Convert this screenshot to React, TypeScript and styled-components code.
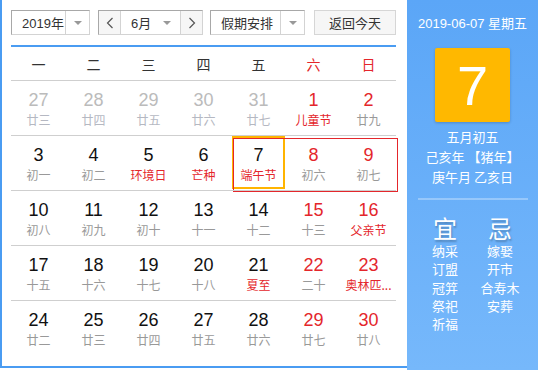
import React from "react";
import styled, { createGlobalStyle } from "styled-components";

const GlobalStyle = createGlobalStyle`
  html, body {
    margin: 0;
    padding: 0;
    background: #fff;
  }
  body {
    font-family: "Liberation Sans", "Noto Sans CJK SC", sans-serif;
  }
`;

const BLUE = "#4a9cf2";
const RED = "#e4262b";

type Day = {
  d: number;
  lunar: string;
  other?: boolean;
  red?: boolean;
  fest?: boolean;
  selected?: boolean;
};

const weeks: Day[][] = [
  [
    { d: 27, lunar: "廿三", other: true },
    { d: 28, lunar: "廿四", other: true },
    { d: 29, lunar: "廿五", other: true },
    { d: 30, lunar: "廿六", other: true },
    { d: 31, lunar: "廿七", other: true },
    { d: 1, lunar: "儿童节", red: true, fest: true },
    { d: 2, lunar: "廿九", red: true },
  ],
  [
    { d: 3, lunar: "初一" },
    { d: 4, lunar: "初二" },
    { d: 5, lunar: "环境日", fest: true },
    { d: 6, lunar: "芒种", fest: true },
    { d: 7, lunar: "端午节", fest: true, selected: true },
    { d: 8, lunar: "初六", red: true },
    { d: 9, lunar: "初七", red: true },
  ],
  [
    { d: 10, lunar: "初八" },
    { d: 11, lunar: "初九" },
    { d: 12, lunar: "初十" },
    { d: 13, lunar: "十一" },
    { d: 14, lunar: "十二" },
    { d: 15, lunar: "十三", red: true },
    { d: 16, lunar: "父亲节", red: true, fest: true },
  ],
  [
    { d: 17, lunar: "十五" },
    { d: 18, lunar: "十六" },
    { d: 19, lunar: "十七" },
    { d: 20, lunar: "十八" },
    { d: 21, lunar: "夏至", fest: true },
    { d: 22, lunar: "二十", red: true },
    { d: 23, lunar: "奥林匹...", red: true, fest: true },
  ],
  [
    { d: 24, lunar: "廿二" },
    { d: 25, lunar: "廿三" },
    { d: 26, lunar: "廿四" },
    { d: 27, lunar: "廿五" },
    { d: 28, lunar: "廿六" },
    { d: 29, lunar: "廿七", red: true },
    { d: 30, lunar: "廿八", red: true },
  ],
];

const weekNames = ["一", "二", "三", "四", "五", "六", "日"];

const Wrapper = styled.div`
  display: flex;
  width: 538px;
  height: 370px;
`;

const Main = styled.div`
  width: 385px;
  height: 356px;
  padding: 10px 11px 0 9px;
  border-left: 2px solid ${BLUE};
  border-bottom: 2px solid ${BLUE};
`;

const Toolbar = styled.div`
  display: flex;
  align-items: stretch;
  height: 25px;
  gap: 8px;
  font-size: 13px;
  color: #333;
`;

const SelectBox = styled.div<{ $w: number; $pull?: boolean }>`
  display: flex;
  width: ${(p) => p.$w}px;
  margin-left: ${(p) => (p.$pull ? "-1px" : "0")};
  box-sizing: border-box;
  border: 1px solid #d3d3d3;
  border-top-color: #a8a8a8;
  border-left-color: #a8a8a8;
  background: #fff;
`;

const SelectText = styled.div`
  flex: 1;
  display: flex;
  align-items: center;
  padding-left: 10px;
`;

const ArrowCell = styled.div`
  width: 23px;
  display: flex;
  align-items: center;
  justify-content: center;
  border-left: 1px solid #d3d3d3;
  &::after {
    content: "";
    border-left: 4px solid transparent;
    border-right: 4px solid transparent;
    border-top: 4px solid #999;
  }
`;

const NavBtn = styled.div<{ $side: "l" | "r" }>`
  width: 21px;
  display: flex;
  align-items: center;
  justify-content: center;
  background: #f6f6f6;
  ${(p) => (p.$side === "l" ? "border-right" : "border-left")}: 1px solid #d3d3d3;
  svg {
    display: block;
  }
`;

const MonthText = styled.div`
  flex: 1;
  display: flex;
  align-items: center;
  justify-content: space-between;
  padding: 0 9px 0 10px;
  &::after {
    content: "";
    border-left: 4px solid transparent;
    border-right: 4px solid transparent;
    border-top: 4px solid #999;
  }
`;

const TodayBtn = styled.div`
  margin-left: auto;
  width: 82px;
  box-sizing: border-box;
  display: flex;
  align-items: center;
  justify-content: center;
  background: #f6f6f6;
  border: 1px solid #d6d6d6;
  color: #333;
`;

const BlueLine = styled.div`
  height: 2px;
  margin-top: 10px;
  background: ${BLUE};
`;

const Grid = styled.div`
  display: grid;
  grid-template-columns: repeat(7, 55px);
`;

const WeekHead = styled.div<{ $red: boolean }>`
  height: 33px;
  display: flex;
  align-items: center;
  justify-content: center;
  font-size: 14px;
  color: ${(p) => (p.$red ? RED : "#333")};
  font-family: "Noto Sans CJK SC", sans-serif;
`;

const Row = styled.div`
  position: relative;
  display: grid;
  grid-template-columns: repeat(7, 55px);
  height: 55px;
  border-top: 1px solid #cfcfcf;
  box-sizing: border-box;
`;

const RangeBox = styled.div`
  position: absolute;
  left: 222px;
  top: 2px;
  width: 165px;
  height: 54px;
  border: 1px solid ${RED};
  box-sizing: border-box;
  pointer-events: none;
`;

const Cell = styled.div<{ $selected?: boolean }>`
  position: relative;
  display: flex;
  flex-direction: column;
  align-items: center;
  padding-top: 9px;
  &::after {
    content: "";
    display: ${(p) => (p.$selected ? "block" : "none")};
    position: absolute;
    left: 1px;
    top: 0;
    width: 53px;
    height: 53px;
    border: 2px solid #ffb400;
    box-sizing: border-box;
  }
`;

const Num = styled.div<{ $color: string }>`
  font-size: 18px;
  line-height: 20px;
  color: ${(p) => p.$color};
`;

const Lunar = styled.div<{ $color: string }>`
  margin-top: 1px;
  font-size: 12px;
  line-height: 17px;
  white-space: nowrap;
  color: ${(p) => p.$color};
  font-family: "Noto Sans CJK SC", sans-serif;
`;

const Side = styled.div`
  width: 131px;
  height: 370px;
  background: linear-gradient(#5ba6f7, #76b8fb);
  color: #fff;
  display: flex;
  flex-direction: column;
  align-items: center;
  font-size: 13px;
`;

const DateLine = styled.div`
  margin-top: 15px;
  line-height: 18px;
`;

const BigDay = styled.div`
  margin-top: 15px;
  width: 75px;
  height: 74px;
  border-radius: 2px;
  background: #ffb800;
  box-shadow: 0 1px 3px rgba(0, 0, 0, 0.2);
  display: flex;
  align-items: center;
  justify-content: center;
  font-size: 56px;
  font-family: "Liberation Sans", sans-serif;
`;

const Info = styled.div`
  margin-top: 5px;
  display: flex;
  flex-direction: column;
  align-items: center;
  line-height: 20px;
  font-family: "Noto Sans CJK SC", sans-serif;
`;

const Divider = styled.div`
  margin-top: 11px;
  width: 110px;
  height: 2px;
  background: rgba(255, 255, 255, 0.3);
`;

const YiJi = styled.div`
  display: grid;
  grid-template-columns: 55px 55px;
  margin-top: 17px;
`;

const YiCol = styled.div`
  display: flex;
  flex-direction: column;
  align-items: center;
`;

const YiHead = styled.div`
  font-size: 24px;
  line-height: 26px;
  text-shadow: 1px 2px 2px rgba(0, 0, 0, 0.25);
`;

const YiItem = styled.div`
  line-height: 18.3px;
  font-size: 13px;
`;

const Chevron = ({ dir }: { dir: "l" | "r" }) => (
  <svg width="8" height="12" viewBox="0 0 8 12">
    <path
      d={dir === "l" ? "M6.5 1 L1.5 6 L6.5 11" : "M1.5 1 L6.5 6 L1.5 11"}
      fill="none"
      stroke="#555"
      strokeWidth="1.2"
    />
  </svg>
);

function numColor(day: Day) {
  if (day.other) return "#bbbbbb";
  if (day.red) return RED;
  return "#111";
}

function lunarColor(day: Day) {
  if (day.other) return "#b5b8c2";
  if (day.fest) return RED;
  return "#999";
}

export default function App() {
  return (
    <>
      <GlobalStyle />
      <Wrapper>
        <Main>
          <Toolbar>
            <SelectBox $w={79}>
              <SelectText>2019年</SelectText>
              <ArrowCell />
            </SelectBox>
            <SelectBox $w={105}>
              <NavBtn $side="l">
                <Chevron dir="l" />
              </NavBtn>
              <MonthText>6月</MonthText>
              <NavBtn $side="r">
                <Chevron dir="r" />
              </NavBtn>
            </SelectBox>
            <SelectBox $w={95} $pull>
              <SelectText>假期安排</SelectText>
              <ArrowCell />
            </SelectBox>
            <TodayBtn>返回今天</TodayBtn>
          </Toolbar>
          <BlueLine />
          <Grid>
            {weekNames.map((w, i) => (
              <WeekHead key={w} $red={i >= 5}>
                {w}
              </WeekHead>
            ))}
          </Grid>
          {weeks.map((week, wi) => (
            <Row key={wi}>
              {week.map((day) => (
                <Cell key={`${wi}-${day.d}`} $selected={day.selected}>
                  <Num $color={numColor(day)}>{day.d}</Num>
                  <Lunar $color={lunarColor(day)}>{day.lunar}</Lunar>
                </Cell>
              ))}
              {wi === 1 && <RangeBox />}
            </Row>
          ))}
        </Main>
        <Side>
          <DateLine>2019-06-07 星期五</DateLine>
          <BigDay>7</BigDay>
          <Info>
            <div>五月初五</div>
            <div>己亥年 【猪年】</div>
            <div>庚午月 乙亥日</div>
          </Info>
          <Divider />
          <YiJi>
            <YiCol>
              <YiHead>宜</YiHead>
              {["纳采", "订盟", "冠笄", "祭祀", "祈福"].map((t) => (
                <YiItem key={t}>{t}</YiItem>
              ))}
            </YiCol>
            <YiCol>
              <YiHead>忌</YiHead>
              {["嫁娶", "开市", "合寿木", "安葬"].map((t) => (
                <YiItem key={t}>{t}</YiItem>
              ))}
            </YiCol>
          </YiJi>
        </Side>
      </Wrapper>
    </>
  );
}
